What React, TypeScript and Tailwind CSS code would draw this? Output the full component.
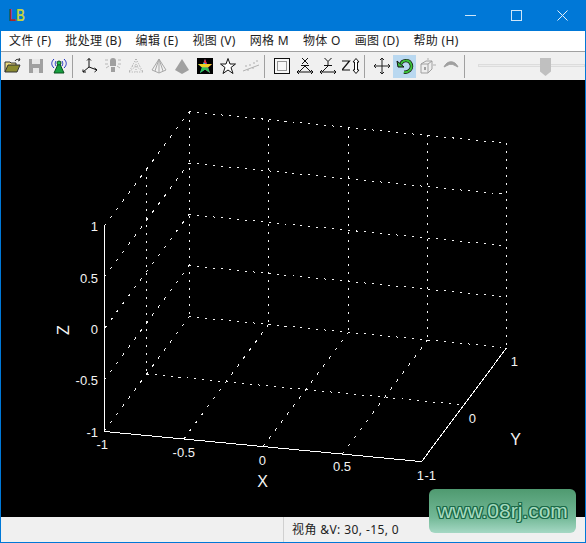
import type { ReactNode } from "react";

const menus = ["文件 (F)", "批处理 (B)", "编辑 (E)", "视图 (V)", "网格 M", "物体 O", "画图 (D)", "帮助 (H)"];

const Btn = ({ children, active }: { children: ReactNode; active?: boolean }) => (
  <div className={"flex h-[23px] w-[23px] shrink-0 items-center justify-center " + (active ? "bg-[#b9d8f0]" : "")}>
    <svg width="18" height="18" viewBox="0 0 18 18" fill="none">
      {children}
    </svg>
  </div>
);

const Sep = () => <div className="mr-[5px] ml-[2px] h-[23px] w-[1px] shrink-0 bg-[#a0a0a0]" />;

// back wall corners and the lines of the plot
const dotted: number[][] = [
  // back wall, horizontal
  [189, 111.7, 506.7, 143.3],
  [189, 163, 506.7, 194.5],
  [189, 214.5, 506.7, 245.8],
  [189, 265.6, 506.7, 297],
  [189, 316.7, 506.7, 347.7],
  // back wall, vertical
  [189, 111.7, 189, 316.7],
  [268.5, 119.6, 268.5, 324.5],
  [348.5, 127.5, 348.5, 332.3],
  [427.5, 135.4, 427.5, 340],
  [506.7, 143.3, 506.7, 347.7],
  // side wall
  [104.5, 226, 189, 111.7],
  [104.5, 277, 189, 163],
  [104.5, 328.5, 189, 214.5],
  [104.5, 380, 189, 265.6],
  [104.5, 431, 189, 316.7],
  [146.7, 168.7, 146.7, 374],
  // floor
  [146.7, 374, 464, 405],
  [183.8, 439, 268.5, 324.5],
  [263, 446.6, 348.5, 332.3],
  [342.3, 454.1, 427.5, 340],
];

const labels: [string, number, number][] = [
  ["1", 98, 231],
  ["0.5", 98, 283],
  ["0", 98, 334],
  ["-0.5", 98, 385],
  ["-1", 98, 437],
  ["-1", 108, 449],
  ["-0.5", 195, 457],
  ["0", 266, 465],
  ["0.5", 351, 471],
  ["1", 424, 480],
  ["-1", 436, 480],
  ["0", 476, 423],
  ["1", 518, 366],
];

const dashFor = (l: number[]) => {
  if (l[0] === l[2]) return "2 6";
  if (Math.abs(l[3] - l[1]) > 60) return "3 7";
  return "2 6";
};

const Plot = () => (
  <svg width="584" height="437" viewBox="1 80 584 437" className="block" fontFamily="'Liberation Sans', sans-serif" fontSize="13" fill="#f4f4f4">
    <g stroke="#f4f4f4" shapeRendering="crispEdges">
      {dotted.map((l, i) => (
        <line key={i} x1={l[0]} y1={l[1]} x2={l[2]} y2={l[3]} strokeDasharray={dashFor(l)} />
      ))}
    </g>
    <polyline points="104.5,226 104.5,431.5 421.6,461.6 506.7,347.7" stroke="#fff" fill="none" shapeRendering="crispEdges" />
    {labels.map(([t, x, y], i) => (
      <text key={i} x={x} y={y} textAnchor="end">
        {t}
      </text>
    ))}
    <text x="262.5" y="487" textAnchor="middle" fontSize="16">X</text>
    <text x="515.5" y="445" textAnchor="middle" fontSize="16">Y</text>
    <text x="0" y="0" textAnchor="middle" fontSize="16" transform="translate(68.5 330) rotate(-90)">Z</text>
  </svg>
);

export default function App() {
  return (
    <div className="relative flex h-[543px] w-[586px] flex-col overflow-hidden border-x border-b border-[#0078d7] bg-[#f0f0f0] font-['Noto_Sans','Noto_Sans_CJK_SC',sans-serif] text-black">
      {/* title bar */}
      <div className="flex h-[31px] shrink-0 items-center bg-[#0078d7]">
        <div className="ml-[8px] flex origin-left scale-x-75 text-[16px] leading-none font-bold font-['Liberation_Sans',sans-serif]">
          <span className="text-[#a52a2a]">L</span>
          <span className="text-[#c4d23c]">B</span>
        </div>
        <div className="ml-auto flex h-full text-[#cfe6f8]">
          <div className="flex w-[46px] items-center justify-center">
            <div className="h-[1px] w-[11px] bg-[#cfe6f8]" />
          </div>
          <div className="flex w-[46px] items-center justify-center">
            <div className="h-[11px] w-[11px] border border-[#cfe6f8]" />
          </div>
          <div className="flex w-[46px] items-center justify-center">
            <svg width="11" height="11" viewBox="0 0 11 11" stroke="#e4f0fa" strokeWidth="1">
              <path d="M0.5 0.5 10.5 10.5M10.5 0.5 0.5 10.5" />
            </svg>
          </div>
        </div>
      </div>

      {/* menu */}
      <div className="flex h-[21px] shrink-0 items-center border-b border-[#a0a0a0] bg-white pl-[1px] text-[12px] leading-none tracking-[0.3px] text-[#222]">
        {menus.map((m) => (
          <span key={m} className="px-[7px] whitespace-nowrap">
            {m}
          </span>
        ))}
      </div>

      {/* toolbar */}
      <div className="flex h-[28px] shrink-0 items-center">
        <Btn>
          <path d="M1 15V5h5l1 1h5v2" fill="#e8d880" stroke="#333" />
          <path d="M1 15 4 8h12l-3 7z" fill="#8a8a30" stroke="#333" />
          <path d="M11 4c1-2 3-2 5-1l-1-2M16 3l-2 1" stroke="#333" />
        </Btn>
        <Btn>
          <path d="M2 2h14v14H2z" fill="#a0a0a0" />
          <path d="M5 2h8v5H5z" fill="#e8e8e8" />
          <path d="M6 11h6v5H6z" fill="#e8e8e8" />
        </Btn>
        <Btn>
          <path d="M9 5 14 16H4z" fill="#18a040" stroke="#0a5020" />
          <circle cx="9" cy="6" r="2" fill="#20c050" stroke="#0a5020" />
          <path d="M4 2C1 5 1 8 4 11M14 2c3 3 3 6 0 9M6 4C5 6 5 7 6 9M12 4c1 2 1 3 0 5" stroke="#2030c0" />
        </Btn>
        <Sep />
        <Btn>
          <path d="M8 1.5V10L2 15M8 10 16 13M6 3.5 8 1.5 10 3.5M2 12.5V15H5M13.5 11 16 13 13.5 15" stroke="#111" />
        </Btn>
        <Btn>
          <path d="M6 4a3 3 0 0 1 6 0v5H6z" fill="#a0a0a0" />
          <path d="M7 10h4v5H7z" fill="#a0a0a0" />
          <path d="M1 3h3M14 3h3M1 7h3M14 7h3M2 11l3-2M16 11l-3-2" stroke="#b8b8b8" />
        </Btn>
        <Btn>
          <path d="M9 2 2 15h14zM9 2v13M5 9h8M2 15l7-6 7 6" stroke="#a8a8a8" strokeDasharray="1 1.5" />
        </Btn>
        <Btn>
          <path d="M9 2 2 13l7 3 7-3zM9 2v14M9 2 5 14M9 2l4 12" stroke="#a8a8a8" />
        </Btn>
        <Btn>
          <path d="M9 2 2 13l7 4 7-4z" fill="#a0a0a0" />
        </Btn>
        <Btn>
          <rect x="1" y="1" width="16" height="16" fill="#000" />
          <path d="M9 2 11 7H16L12 10.5 14 16 9 12.5z" fill="#c030c0" />
          <path d="M9 2 7 7H2L6 10.5 4 16 9 12.5z" fill="#20c0e0" />
          <path d="M2 7H16L12 10.5H6z" fill="#f0d020" />
          <path d="M9 2 7.5 6H10.5z" fill="#e03030" />
          <path d="M6 10.5 4 16 9 12.5 14 16 12 10.5z" fill="#30c050" />
        </Btn>
        <Btn>
          <path d="M9 1.5 11 7H16.5L12 10.5 14 16.5 9 13 4 16.5 6 10.5 1.5 7H7z" fill="#fff" stroke="#111" />
        </Btn>
        <Btn>
          <path d="M1 14 17 8" stroke="#b0b0b0" />
          <path d="M3 9h2M7 8h2M11 6h2M14 4h2M5 13h2M10 11h2" stroke="#b0b0b0" />
        </Btn>
        <Sep />
        <Btn>
          <rect x="1.5" y="1.5" width="15" height="15" fill="#f8f8f8" stroke="#111" />
          <rect x="4.5" y="4.5" width="9" height="9" stroke="#333" strokeDasharray="1 1" />
        </Btn>
        <Btn>
          <path d="M6 1 12 7M12 1 6 7M5 8.5H13" stroke="#111" />
          <path d="M9 9 3 15M9 9 15 15M1 15H17M3 13 1 15 3 17M15 13 17 15 15 17" stroke="#111" />
        </Btn>
        <Btn>
          <path d="M5.5 1 9 4.5 12.5 1M9 4.5V8M5 8.5H13" stroke="#111" />
          <path d="M9 9 3 15M1 15H17M3 13 1 15 3 17M15 13 17 15 15 17" stroke="#111" />
        </Btn>
        <Btn>
          <path d="M0 4H7.5L0 13H8" stroke="#111" strokeWidth="1.2" />
          <path d="M14 1.5 17 5H15.5V13H17L14 16.5 11 13H12.5V5H11z" fill="#fff" stroke="#111" />
        </Btn>
        <Sep />
        <Btn>
          <path d="M9 1V17M1 9H17M7 3 9 1 11 3M7 15 9 17 11 15M3 7 1 9 3 11M15 7 17 9 15 11" stroke="#222" />
        </Btn>
        <Btn active>
          <path d="M5 7C6 3 13 2 15 7 17 12 12 16 8 15" stroke="#111" strokeWidth="3.4" />
          <path d="M5 7C6 3 13 2 15 7 17 12 12 16 8 15" stroke="#3cc03c" strokeWidth="2" />
          <path d="M1 4 8 10H2z" fill="#3cc03c" stroke="#111" />
        </Btn>
        <Btn>
          <path d="M2 7 7 4H13V12L9 16H2zM2 7H9V16M9 7 13 4" stroke="#a0a0a0" fill="#eee" />
          <path d="M5 10H7V13H5z" fill="#a0a0a0" />
          <path d="M14 8H17M9 1V3" stroke="#b0b0b0" />
        </Btn>
        <Btn>
          <path d="M2 10C5 3 13 3 16 10L12 8C10 7 8 7 6 8z" fill="#a0a0a0" stroke="#a0a0a0" />
        </Btn>
        <Sep />
        {/* slider */}
        <div className="relative ml-[8px] h-full grow">
          <div className="absolute top-[12px] right-0 left-0 h-[3px] border border-[#dcdcdc] bg-[#ececec]" />
          <div className="absolute top-[6px] left-[62px] h-[18px] w-[11px] bg-[#c0c0c0] [clip-path:polygon(0_0,100%_0,100%_75%,50%_100%,0_75%)]" />
        </div>
      </div>

      {/* plot area */}
      <div className="h-[437px] shrink-0 bg-black">
        <Plot />
      </div>

      {/* status bar */}
      <div className="flex grow items-center bg-[#f0f0f0] text-[12px] leading-none tracking-[0.4px] text-[#222]">
        <div className="ml-[282px] h-full w-[1px] bg-[#d0d0d0]" />
        <span className="ml-[8px] whitespace-nowrap">视角 &amp;V: 30, -15, 0</span>
      </div>

      {/* watermark */}
      <div className="absolute top-[489px] left-[428px] flex h-[44px] w-[147px] items-center justify-center rounded-[6px] bg-[linear-gradient(to_bottom,#4f9a70,#72b896_64%,#a5d8c4)] font-['Liberation_Sans',sans-serif] text-[21px] text-[#a8dcc0] [text-shadow:1px_0_#1a6a48,-1px_0_#1a6a48,0_1px_#1a6a48,0_-1px_#1a6a48,1px_1px_#1a6a48,-1px_-1px_#1a6a48,1px_-1px_#1a6a48,-1px_1px_#1a6a48]">
        www.08rj.com
      </div>
    </div>
  );
}
